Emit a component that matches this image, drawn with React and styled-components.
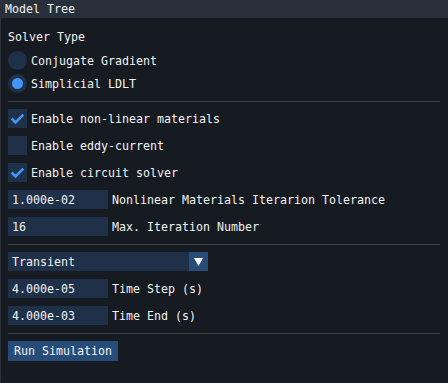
import React, { useState } from "react";
import styled, { createGlobalStyle } from "styled-components";

const GlobalStyle = createGlobalStyle`
  html, body {
    margin: 0;
    padding: 0;
    background: #161a21;
  }
  body {
    font-family: "DejaVu Sans Mono", "Liberation Mono", monospace;
    font-size: 11.63px;
    color: #f2f2f2;
  }
`;

const Window = styled.div`
  width: 448px;
  height: 383px;
  box-sizing: border-box;
  border-left: 1px solid #2c313a;
  background: #161a21;
  display: flex;
  flex-direction: column;
  overflow: hidden;
`;

const TitleBar = styled.div`
  height: 18px;
  background: #28313b;
  display: flex;
  align-items: center;
  padding-left: 4px;
  padding-bottom: 1px;
  box-sizing: border-box;
  white-space: pre;
`;

const Content = styled.div`
  display: flex;
  flex-direction: column;
  gap: 8px;
  padding: 9px 8px 8px 7px;
`;

const Heading = styled.div`
  height: 19px;
  display: flex;
  align-items: center;
  margin-bottom: -3px;
`;

const RadioGroup = styled.div`
  display: flex;
  flex-direction: column;
  gap: 4px;
`;

const Row = styled.label`
  height: 19px;
  display: flex;
  align-items: center;
  gap: 4px;
  white-space: pre;
  cursor: default;
`;

const Circle = styled.span`
  width: 19px;
  height: 19px;
  border-radius: 50%;
  background: #1f3049;
  display: flex;
  align-items: center;
  justify-content: center;
  flex: none;
  &::after {
    content: "";
    width: 11px;
    height: 11px;
    border-radius: 50%;
    background: #4296fa;
    display: ${(p) => (p.$on ? "block" : "none")};
  }
`;

const Box = styled.span`
  width: 19px;
  height: 19px;
  background: #1f3049;
  flex: none;
  display: block;
  svg {
    display: block;
  }
`;

const Separator = styled.div`
  height: 1px;
  margin-bottom: -1px;
  background: #3c404a;
`;

const Field = styled.div`
  width: ${(p) => p.$w || 100}px;
  height: 19px;
  box-sizing: border-box;
  background: #1f3049;
  padding-left: 4px;
  display: flex;
  align-items: center;
  flex: none;
  white-space: pre;
`;

const Combo = styled(Field)`
  width: 200px;
  justify-content: space-between;
  padding-right: 0;
`;

const ArrowButton = styled.span`
  width: 19px;
  height: 19px;
  background: #284c78;
  display: flex;
  align-items: center;
  justify-content: center;
`;

const Button = styled.button`
  align-self: flex-start;
  height: 20px;
  padding: 0 6px;
  border: none;
  background: #284c78;
  color: #f2f2f2;
  font: inherit;
  display: flex;
  align-items: center;
`;

function Radio({ on, children }) {
  return (
    <Row>
      <Circle $on={on} />
      {children}
    </Row>
  );
}

function Checkbox({ on, children }) {
  return (
    <Row>
      <Box>
        {on && (
          <svg width="19" height="19" viewBox="0 0 19 19">
            <polyline
              points="3.65,9.5 7.55,13.4 15.35,5.6"
              fill="none"
              stroke="#4296fa"
              strokeWidth="2.6"
            />
          </svg>
        )}
      </Box>
      {children}
    </Row>
  );
}

function Input({ value, label }) {
  return (
    <Row>
      <Field>{value}</Field>
      {label}
    </Row>
  );
}

export default function App() {
  const [solver] = useState("ldlt");
  return (
    <>
      <GlobalStyle />
      <Window>
        <TitleBar>Model Tree</TitleBar>
        <Content>
          <Heading>Solver Type</Heading>
          <RadioGroup>
            <Radio on={solver === "cg"}>Conjugate Gradient</Radio>
            <Radio on={solver === "ldlt"}>Simplicial LDLT</Radio>
          </RadioGroup>
          <Separator />
          <Checkbox on>Enable non-linear materials</Checkbox>
          <Checkbox>Enable eddy-current</Checkbox>
          <Checkbox on>Enable circuit solver</Checkbox>
          <Input value="1.000e-02" label="Nonlinear Materials Iterarion Tolerance" />
          <Input value="16" label="Max. Iteration Number" />
          <Separator />
          <Combo>
            Transient
            <ArrowButton>
              <svg width="9" height="8" viewBox="0 0 9 8">
                <polygon points="0,0 9,0 4.5,8" fill="#ffffff" />
              </svg>
            </ArrowButton>
          </Combo>
          <Input value="4.000e-05" label="Time Step (s)" />
          <Input value="4.000e-03" label="Time End (s)" />
          <Separator />
          <Button>Run Simulation</Button>
        </Content>
      </Window>
    </>
  );
}
